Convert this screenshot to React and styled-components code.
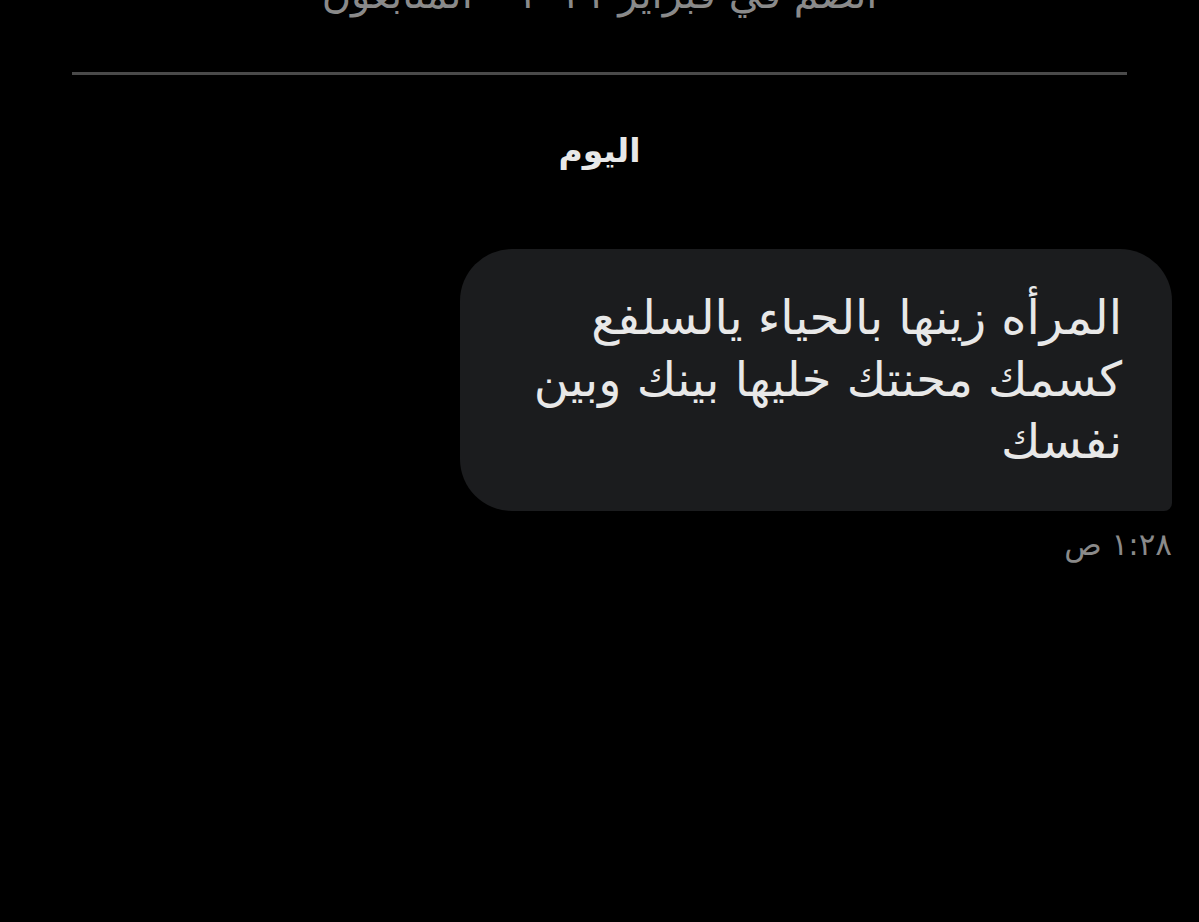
import React from "react";
import styled, { createGlobalStyle } from "styled-components";

const Global = createGlobalStyle`
  html, body { margin: 0; padding: 0; background: #000; }
  body { font-family: "DejaVu Sans", "Noto Sans", sans-serif; }
`;

const Page = styled.div`
  width: 1199px;
  height: 922px;
  background: #000;
  overflow: hidden;
  direction: rtl;
  display: flex;
  flex-direction: column;
`;

const Header = styled.div`
  height: 72px;
  display: flex;
  flex-direction: column;
  align-items: center;
  justify-content: flex-start;
  margin: 0 72px;
  border-bottom: 3px solid #4a4a4a;
  overflow: hidden;
`;

const JoinedText = styled.div`
  margin-top: -30px;
  font-size: 40px;
  line-height: 48px;
  color: #8a8a8a;
  white-space: nowrap;
`;

const DayLabel = styled.div`
  margin-top: 50px;
  align-self: center;
  font-size: 33px;
  font-weight: 700;
  line-height: 52px;
  color: #e8e8e8;
`;

const Thread = styled.div`
  margin-top: 72px;
  padding: 0 27px;
  display: flex;
  flex-direction: column;
  align-items: flex-start;
`;

const Bubble = styled.div`
  width: 712px;
  box-sizing: border-box;
  background: #1b1c1e;
  border-radius: 52px 52px 8px 52px;
  padding: 37px 50px 39px 30px;
  font-size: 48px;
  line-height: 62px;
  color: #e8e8e8;
  text-align: right;
`;

const Time = styled.div`
  margin-top: 14px;
  font-size: 31px;
  line-height: 38px;
  color: #8a8a8a;
`;

export default function App() {
  return (
    <Page>
      <Global />
      <Header>
        <JoinedText>انضم في فبراير ٢٠٢١ ٠ المتابعون</JoinedText>
      </Header>
      <DayLabel>اليوم</DayLabel>
      <Thread>
        <Bubble>
          المرأه زينها بالحياء يالسلفع
          <br />
          كسمك محنتك خليها بينك وبين
          <br />
          نفسك
        </Bubble>
        <Time>١:٢٨ ص</Time>
      </Thread>
    </Page>
  );
}
